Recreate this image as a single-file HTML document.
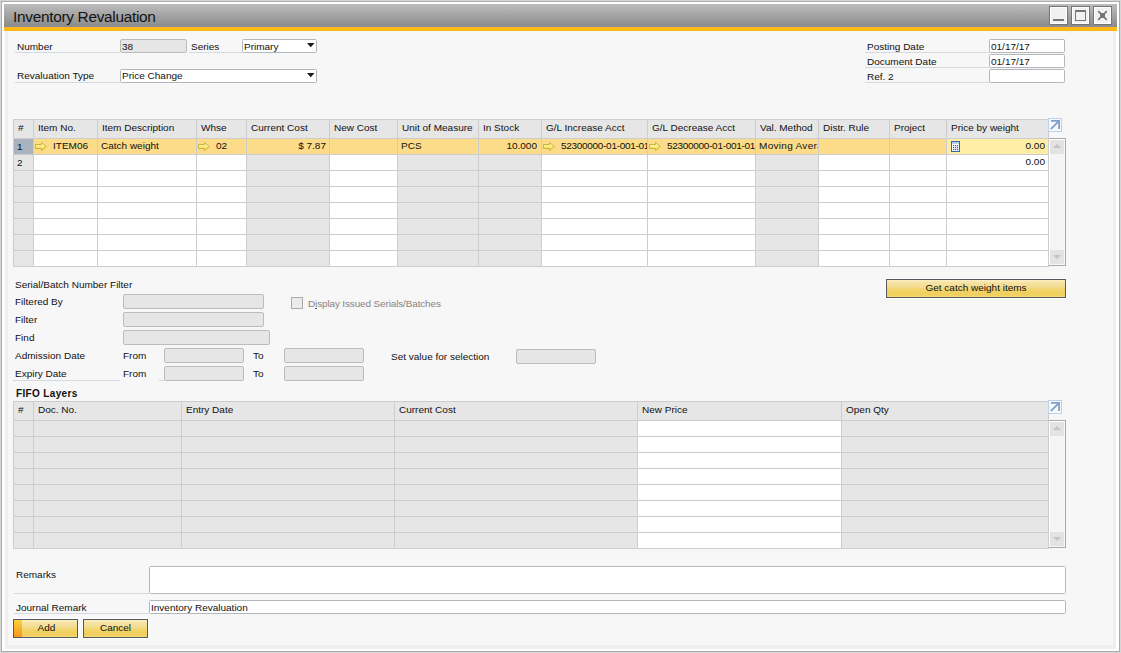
<!DOCTYPE html><html><head><meta charset="utf-8"><style>
*{margin:0;padding:0;box-sizing:border-box}
svg{display:block}
html,body{width:1121px;height:653px;overflow:hidden;background:#d7d7d7;font-family:"Liberation Sans",sans-serif}
.a{position:absolute}
.t{position:absolute;font-size:10px;line-height:10px;white-space:pre;color:#111;transform:scaleY(0.9);transform-origin:0 0}
.tb{position:absolute;font-size:10px;line-height:10px;white-space:pre;color:#101010;font-weight:bold}
.f{position:absolute;border:1px solid #b2b7bb;border-radius:1.5px;background:#fff}
.fd{position:absolute;border:1px solid #bcbcbc;border-radius:2px;background:#e6e6e6}
.ul{position:absolute;height:1px;background:#d2d9e0}
.tri{position:absolute;width:8px;height:5px}
.btn{position:absolute;border:1px solid #53575f;background:linear-gradient(#fdf0c4 0,#f6e3a4 15%,#f4dc8e 45%,#f3d56e 52%,#f0ce5a 88%,#f6dc82 100%);box-shadow:0 0 0 1px #fff}
.clip{position:absolute;overflow:hidden}
</style></head><body><div class="a" style="left:1px;top:1px;width:1119px;height:651px;border:1px solid #aaaaaa;background:#ffffff"></div>
<div class="a" style="left:5px;top:31px;width:1111px;height:618px;background:#efefef"></div>
<div class="a" style="left:8px;top:31px;width:1105px;height:614px;background:#f7f7f7"></div>
<div class="a" style="left:4px;top:4px;width:1113px;height:22px;background:linear-gradient(#bdbdbd,#8c8c8c)"></div>
<div class="a" style="left:4px;top:26px;width:1113px;height:1px;background:#868d96"></div>
<div class="a" style="left:4px;top:27px;width:1113px;height:4px;background:#fdb813"></div>
<div class="a" style="left:13px;top:9px;font-size:15.4px;letter-spacing:-0.3px;line-height:16px;white-space:pre;color:#141414">Inventory Revaluation</div>
<div class="a" style="left:1049px;top:6px;width:19px;height:19px;border:1px solid #767676;background:#f1f1f1;box-shadow:inset 0 0 0 1px #fff"></div>
<div class="a" style="left:1071px;top:6px;width:19px;height:19px;border:1px solid #767676;background:#f1f1f1;box-shadow:inset 0 0 0 1px #fff"></div>
<div class="a" style="left:1093px;top:6px;width:19px;height:19px;border:1px solid #767676;background:#f1f1f1;box-shadow:inset 0 0 0 1px #fff"></div>
<div class="a" style="left:1053px;top:19px;width:11px;height:2px;background:#767676"></div>
<div class="a" style="left:1075px;top:10px;width:11px;height:11px;border:1px solid #767676;border-top-width:2px"></div>
<svg class="a" style="left:1097px;top:10px" width="11" height="11" viewBox="0 0 11 11"><path d="M1.7 1.7L9.3 9.3M9.3 1.7L1.7 9.3" stroke="#767676" stroke-width="1.7" stroke-linecap="round"/><rect x="3" y="3" width="5" height="5" fill="#767676"/></svg>
<div class="t" style="left:17px;top:43px;">Number</div>
<div class="ul" style="left:15px;top:52px;width:105px"></div>
<div class="fd" style="left:120px;top:39px;width:67px;height:14px"></div>
<div class="t" style="left:122px;top:43px;">38</div>
<div class="t" style="left:191px;top:43px;">Series</div>
<div class="ul" style="left:189px;top:52px;width:53px"></div>
<div class="f" style="left:242px;top:39px;width:75px;height:14px"></div>
<div class="t" style="left:244px;top:43px;">Primary</div>
<svg class="tri" style="left:307px;top:43px" viewBox="0 0 8 5"><path d="M0 0H7.5L3.75 4.2Z" fill="#1c1c1c"/></svg>
<div class="t" style="left:17px;top:72px;">Revaluation Type</div>
<div class="ul" style="left:15px;top:82px;width:105px"></div>
<div class="f" style="left:120px;top:69px;width:197px;height:14px"></div>
<div class="t" style="left:122px;top:72px;">Price Change</div>
<svg class="tri" style="left:307px;top:73px" viewBox="0 0 8 5"><path d="M0 0H7.5L3.75 4.2Z" fill="#1c1c1c"/></svg>
<div class="t" style="left:867px;top:43px;">Posting Date</div>
<div class="ul" style="left:865px;top:52px;width:124px"></div>
<div class="f" style="left:989px;top:39px;width:76px;height:14px"></div>
<div class="t" style="left:991px;top:43px;">01/17/17</div>
<div class="t" style="left:867px;top:58px;">Document Date</div>
<div class="ul" style="left:865px;top:67px;width:124px"></div>
<div class="f" style="left:989px;top:54px;width:76px;height:14px"></div>
<div class="t" style="left:991px;top:58px;">01/17/17</div>
<div class="t" style="left:867px;top:73px;">Ref. 2</div>
<div class="ul" style="left:865px;top:82px;width:124px"></div>
<div class="f" style="left:989px;top:69px;width:76px;height:14px"></div>
<div class="a" style="left:13px;top:119px;width:1036px;height:148px;background:#cdcdcd"></div>
<div class="a" style="left:14px;top:120px;width:19px;height:18px;background:#e6e6e6"></div>
<div class="a" style="left:34px;top:120px;width:63px;height:18px;background:#e6e6e6"></div>
<div class="a" style="left:98px;top:120px;width:98px;height:18px;background:#e6e6e6"></div>
<div class="a" style="left:197px;top:120px;width:49px;height:18px;background:#e6e6e6"></div>
<div class="a" style="left:247px;top:120px;width:82px;height:18px;background:#e6e6e6"></div>
<div class="a" style="left:330px;top:120px;width:67px;height:18px;background:#e6e6e6"></div>
<div class="a" style="left:398px;top:120px;width:80px;height:18px;background:#e6e6e6"></div>
<div class="a" style="left:479px;top:120px;width:62px;height:18px;background:#e6e6e6"></div>
<div class="a" style="left:542px;top:120px;width:105px;height:18px;background:#e6e6e6"></div>
<div class="a" style="left:648px;top:120px;width:107px;height:18px;background:#e6e6e6"></div>
<div class="a" style="left:756px;top:120px;width:62px;height:18px;background:#e6e6e6"></div>
<div class="a" style="left:819px;top:120px;width:70px;height:18px;background:#e6e6e6"></div>
<div class="a" style="left:890px;top:120px;width:56px;height:18px;background:#e6e6e6"></div>
<div class="a" style="left:947px;top:120px;width:101px;height:18px;background:#e6e6e6"></div>
<div class="a" style="left:14px;top:139px;width:19px;height:15px;background:#a9b2bf"></div>
<div class="a" style="left:34px;top:139px;width:63px;height:15px;background:#fcdc88"></div>
<div class="a" style="left:98px;top:139px;width:98px;height:15px;background:#fcdc88"></div>
<div class="a" style="left:197px;top:139px;width:49px;height:15px;background:#fcdc88"></div>
<div class="a" style="left:247px;top:139px;width:82px;height:15px;background:#fcdc88"></div>
<div class="a" style="left:330px;top:139px;width:67px;height:15px;background:#fcdc88"></div>
<div class="a" style="left:398px;top:139px;width:80px;height:15px;background:#fcdc88"></div>
<div class="a" style="left:479px;top:139px;width:62px;height:15px;background:#fcdc88"></div>
<div class="a" style="left:542px;top:139px;width:105px;height:15px;background:#fcdc88"></div>
<div class="a" style="left:648px;top:139px;width:107px;height:15px;background:#fcdc88"></div>
<div class="a" style="left:756px;top:139px;width:62px;height:15px;background:#fcdc88"></div>
<div class="a" style="left:819px;top:139px;width:70px;height:15px;background:#fcdc88"></div>
<div class="a" style="left:890px;top:139px;width:56px;height:15px;background:#fcdc88"></div>
<div class="a" style="left:947px;top:139px;width:101px;height:15px;background:#fdeda5"></div>
<div class="a" style="left:14px;top:155px;width:19px;height:15px;background:#e6e6e6"></div>
<div class="a" style="left:34px;top:155px;width:63px;height:15px;background:#ffffff"></div>
<div class="a" style="left:98px;top:155px;width:98px;height:15px;background:#ffffff"></div>
<div class="a" style="left:197px;top:155px;width:49px;height:15px;background:#ffffff"></div>
<div class="a" style="left:247px;top:155px;width:82px;height:15px;background:#e6e6e6"></div>
<div class="a" style="left:330px;top:155px;width:67px;height:15px;background:#ffffff"></div>
<div class="a" style="left:398px;top:155px;width:80px;height:15px;background:#e6e6e6"></div>
<div class="a" style="left:479px;top:155px;width:62px;height:15px;background:#e6e6e6"></div>
<div class="a" style="left:542px;top:155px;width:105px;height:15px;background:#ffffff"></div>
<div class="a" style="left:648px;top:155px;width:107px;height:15px;background:#ffffff"></div>
<div class="a" style="left:756px;top:155px;width:62px;height:15px;background:#e6e6e6"></div>
<div class="a" style="left:819px;top:155px;width:70px;height:15px;background:#ffffff"></div>
<div class="a" style="left:890px;top:155px;width:56px;height:15px;background:#ffffff"></div>
<div class="a" style="left:947px;top:155px;width:101px;height:15px;background:#ffffff"></div>
<div class="a" style="left:14px;top:171px;width:19px;height:15px;background:#e6e6e6"></div>
<div class="a" style="left:34px;top:171px;width:63px;height:15px;background:#ffffff"></div>
<div class="a" style="left:98px;top:171px;width:98px;height:15px;background:#ffffff"></div>
<div class="a" style="left:197px;top:171px;width:49px;height:15px;background:#ffffff"></div>
<div class="a" style="left:247px;top:171px;width:82px;height:15px;background:#e6e6e6"></div>
<div class="a" style="left:330px;top:171px;width:67px;height:15px;background:#ffffff"></div>
<div class="a" style="left:398px;top:171px;width:80px;height:15px;background:#e6e6e6"></div>
<div class="a" style="left:479px;top:171px;width:62px;height:15px;background:#e6e6e6"></div>
<div class="a" style="left:542px;top:171px;width:105px;height:15px;background:#ffffff"></div>
<div class="a" style="left:648px;top:171px;width:107px;height:15px;background:#ffffff"></div>
<div class="a" style="left:756px;top:171px;width:62px;height:15px;background:#e6e6e6"></div>
<div class="a" style="left:819px;top:171px;width:70px;height:15px;background:#ffffff"></div>
<div class="a" style="left:890px;top:171px;width:56px;height:15px;background:#ffffff"></div>
<div class="a" style="left:947px;top:171px;width:101px;height:15px;background:#ffffff"></div>
<div class="a" style="left:14px;top:187px;width:19px;height:15px;background:#e6e6e6"></div>
<div class="a" style="left:34px;top:187px;width:63px;height:15px;background:#ffffff"></div>
<div class="a" style="left:98px;top:187px;width:98px;height:15px;background:#ffffff"></div>
<div class="a" style="left:197px;top:187px;width:49px;height:15px;background:#ffffff"></div>
<div class="a" style="left:247px;top:187px;width:82px;height:15px;background:#e6e6e6"></div>
<div class="a" style="left:330px;top:187px;width:67px;height:15px;background:#ffffff"></div>
<div class="a" style="left:398px;top:187px;width:80px;height:15px;background:#e6e6e6"></div>
<div class="a" style="left:479px;top:187px;width:62px;height:15px;background:#e6e6e6"></div>
<div class="a" style="left:542px;top:187px;width:105px;height:15px;background:#ffffff"></div>
<div class="a" style="left:648px;top:187px;width:107px;height:15px;background:#ffffff"></div>
<div class="a" style="left:756px;top:187px;width:62px;height:15px;background:#e6e6e6"></div>
<div class="a" style="left:819px;top:187px;width:70px;height:15px;background:#ffffff"></div>
<div class="a" style="left:890px;top:187px;width:56px;height:15px;background:#ffffff"></div>
<div class="a" style="left:947px;top:187px;width:101px;height:15px;background:#ffffff"></div>
<div class="a" style="left:14px;top:203px;width:19px;height:15px;background:#e6e6e6"></div>
<div class="a" style="left:34px;top:203px;width:63px;height:15px;background:#ffffff"></div>
<div class="a" style="left:98px;top:203px;width:98px;height:15px;background:#ffffff"></div>
<div class="a" style="left:197px;top:203px;width:49px;height:15px;background:#ffffff"></div>
<div class="a" style="left:247px;top:203px;width:82px;height:15px;background:#e6e6e6"></div>
<div class="a" style="left:330px;top:203px;width:67px;height:15px;background:#ffffff"></div>
<div class="a" style="left:398px;top:203px;width:80px;height:15px;background:#e6e6e6"></div>
<div class="a" style="left:479px;top:203px;width:62px;height:15px;background:#e6e6e6"></div>
<div class="a" style="left:542px;top:203px;width:105px;height:15px;background:#ffffff"></div>
<div class="a" style="left:648px;top:203px;width:107px;height:15px;background:#ffffff"></div>
<div class="a" style="left:756px;top:203px;width:62px;height:15px;background:#e6e6e6"></div>
<div class="a" style="left:819px;top:203px;width:70px;height:15px;background:#ffffff"></div>
<div class="a" style="left:890px;top:203px;width:56px;height:15px;background:#ffffff"></div>
<div class="a" style="left:947px;top:203px;width:101px;height:15px;background:#ffffff"></div>
<div class="a" style="left:14px;top:219px;width:19px;height:15px;background:#e6e6e6"></div>
<div class="a" style="left:34px;top:219px;width:63px;height:15px;background:#ffffff"></div>
<div class="a" style="left:98px;top:219px;width:98px;height:15px;background:#ffffff"></div>
<div class="a" style="left:197px;top:219px;width:49px;height:15px;background:#ffffff"></div>
<div class="a" style="left:247px;top:219px;width:82px;height:15px;background:#e6e6e6"></div>
<div class="a" style="left:330px;top:219px;width:67px;height:15px;background:#ffffff"></div>
<div class="a" style="left:398px;top:219px;width:80px;height:15px;background:#e6e6e6"></div>
<div class="a" style="left:479px;top:219px;width:62px;height:15px;background:#e6e6e6"></div>
<div class="a" style="left:542px;top:219px;width:105px;height:15px;background:#ffffff"></div>
<div class="a" style="left:648px;top:219px;width:107px;height:15px;background:#ffffff"></div>
<div class="a" style="left:756px;top:219px;width:62px;height:15px;background:#e6e6e6"></div>
<div class="a" style="left:819px;top:219px;width:70px;height:15px;background:#ffffff"></div>
<div class="a" style="left:890px;top:219px;width:56px;height:15px;background:#ffffff"></div>
<div class="a" style="left:947px;top:219px;width:101px;height:15px;background:#ffffff"></div>
<div class="a" style="left:14px;top:235px;width:19px;height:15px;background:#e6e6e6"></div>
<div class="a" style="left:34px;top:235px;width:63px;height:15px;background:#ffffff"></div>
<div class="a" style="left:98px;top:235px;width:98px;height:15px;background:#ffffff"></div>
<div class="a" style="left:197px;top:235px;width:49px;height:15px;background:#ffffff"></div>
<div class="a" style="left:247px;top:235px;width:82px;height:15px;background:#e6e6e6"></div>
<div class="a" style="left:330px;top:235px;width:67px;height:15px;background:#ffffff"></div>
<div class="a" style="left:398px;top:235px;width:80px;height:15px;background:#e6e6e6"></div>
<div class="a" style="left:479px;top:235px;width:62px;height:15px;background:#e6e6e6"></div>
<div class="a" style="left:542px;top:235px;width:105px;height:15px;background:#ffffff"></div>
<div class="a" style="left:648px;top:235px;width:107px;height:15px;background:#ffffff"></div>
<div class="a" style="left:756px;top:235px;width:62px;height:15px;background:#e6e6e6"></div>
<div class="a" style="left:819px;top:235px;width:70px;height:15px;background:#ffffff"></div>
<div class="a" style="left:890px;top:235px;width:56px;height:15px;background:#ffffff"></div>
<div class="a" style="left:947px;top:235px;width:101px;height:15px;background:#ffffff"></div>
<div class="a" style="left:14px;top:251px;width:19px;height:15px;background:#e6e6e6"></div>
<div class="a" style="left:34px;top:251px;width:63px;height:15px;background:#ffffff"></div>
<div class="a" style="left:98px;top:251px;width:98px;height:15px;background:#ffffff"></div>
<div class="a" style="left:197px;top:251px;width:49px;height:15px;background:#ffffff"></div>
<div class="a" style="left:247px;top:251px;width:82px;height:15px;background:#e6e6e6"></div>
<div class="a" style="left:330px;top:251px;width:67px;height:15px;background:#ffffff"></div>
<div class="a" style="left:398px;top:251px;width:80px;height:15px;background:#e6e6e6"></div>
<div class="a" style="left:479px;top:251px;width:62px;height:15px;background:#e6e6e6"></div>
<div class="a" style="left:542px;top:251px;width:105px;height:15px;background:#ffffff"></div>
<div class="a" style="left:648px;top:251px;width:107px;height:15px;background:#ffffff"></div>
<div class="a" style="left:756px;top:251px;width:62px;height:15px;background:#e6e6e6"></div>
<div class="a" style="left:819px;top:251px;width:70px;height:15px;background:#ffffff"></div>
<div class="a" style="left:890px;top:251px;width:56px;height:15px;background:#ffffff"></div>
<div class="a" style="left:947px;top:251px;width:101px;height:15px;background:#ffffff"></div>
<div class="t" style="left:18px;top:124px;">#</div>
<div class="t" style="left:38px;top:124px;">Item No.</div>
<div class="t" style="left:102px;top:124px;">Item Description</div>
<div class="t" style="left:201px;top:124px;">Whse</div>
<div class="t" style="left:251px;top:124px;">Current Cost</div>
<div class="t" style="left:334px;top:124px;">New Cost</div>
<div class="t" style="left:402px;top:124px;">Unit of Measure</div>
<div class="t" style="left:483px;top:124px;">In Stock</div>
<div class="t" style="left:546px;top:124px;">G/L Increase Acct</div>
<div class="t" style="left:652px;top:124px;">G/L Decrease Acct</div>
<div class="t" style="left:760px;top:124px;">Val. Method</div>
<div class="t" style="left:823px;top:124px;">Distr. Rule</div>
<div class="t" style="left:894px;top:124px;">Project</div>
<div class="t" style="left:951px;top:124px;">Price by weight</div>
<div class="t" style="left:17px;top:143px;">1</div>
<div class="t" style="left:17px;top:159px;">2</div>
<svg width="0" height="0" style="position:absolute"><defs><linearGradient id="ag" x1="0" y1="0" x2="0" y2="1"><stop offset="0" stop-color="#fffbe0"/><stop offset="1" stop-color="#f6d820"/></linearGradient></defs></svg>
<div class="clip" style="left:34px;top:139px;width:63px;height:15px"><div class="a" style="left:1px;top:3px;line-height:0"><svg width="12" height="9" viewBox="0 0 12 9"><path d="M0.5 2.5H6.5V0.5L11.3 4.5L6.5 8.5V6.5H0.5Z" fill="url(#ag)" stroke="#c9b53e" stroke-width="1"/></svg></div><div class="t" style="left:19px;top:3px;letter-spacing:0">ITEM06</div></div>
<div class="clip" style="left:197px;top:139px;width:49px;height:15px"><div class="a" style="left:1px;top:3px;line-height:0"><svg width="12" height="9" viewBox="0 0 12 9"><path d="M0.5 2.5H6.5V0.5L11.3 4.5L6.5 8.5V6.5H0.5Z" fill="url(#ag)" stroke="#c9b53e" stroke-width="1"/></svg></div><div class="t" style="left:19px;top:3px;letter-spacing:0">02</div></div>
<div class="clip" style="left:542px;top:139px;width:105px;height:15px"><div class="a" style="left:1px;top:3px;line-height:0"><svg width="12" height="9" viewBox="0 0 12 9"><path d="M0.5 2.5H6.5V0.5L11.3 4.5L6.5 8.5V6.5H0.5Z" fill="url(#ag)" stroke="#c9b53e" stroke-width="1"/></svg></div><div class="t" style="left:19px;top:3px;letter-spacing:-0.3px">52300000-01-001-01</div></div>
<div class="clip" style="left:648px;top:139px;width:107px;height:15px"><div class="a" style="left:1px;top:3px;line-height:0"><svg width="12" height="9" viewBox="0 0 12 9"><path d="M0.5 2.5H6.5V0.5L11.3 4.5L6.5 8.5V6.5H0.5Z" fill="url(#ag)" stroke="#c9b53e" stroke-width="1"/></svg></div><div class="t" style="left:19px;top:3px;letter-spacing:-0.3px">52300000-01-001-01</div></div>
<div class="clip" style="left:98px;top:139px;width:98px;height:15px"><div class="t" style="left:3px;top:3px">Catch weight</div></div>
<div class="clip" style="left:398px;top:139px;width:80px;height:15px"><div class="t" style="left:3px;top:3px">PCS</div></div>
<div class="clip" style="left:756px;top:139px;width:62px;height:15px"><div class="t" style="left:3px;top:3px;letter-spacing:0.3px">Moving Average</div></div>
<div class="clip" style="left:247px;top:139px;width:82px;height:15px"><div class="t" style="right:3px;top:3px">$ 7.87</div></div>
<div class="clip" style="left:479px;top:139px;width:62px;height:15px"><div class="t" style="right:4px;top:3px">10.000</div></div>
<div class="clip" style="left:947px;top:139px;width:101px;height:15px"><div class="t" style="right:3px;top:3px">0.00</div></div>
<div class="clip" style="left:947px;top:155px;width:101px;height:15px"><div class="t" style="right:3px;top:3px">0.00</div></div>
<svg class="a" style="left:951px;top:141px" width="9" height="11" viewBox="0 0 9 11"><rect x="0.5" y="0.5" width="8" height="10" fill="#fbfdff" stroke="#3166b2"/><rect x="1" y="1" width="7" height="2" fill="#b9d0ee"/><g fill="#2a5ca8"><rect x="2" y="4" width="1.2" height="1.2"/><rect x="4" y="4" width="1.2" height="1.2"/><rect x="6" y="4" width="1.2" height="1.2"/><rect x="2" y="6" width="1.2" height="1.2"/><rect x="4" y="6" width="1.2" height="1.2"/><rect x="6" y="6" width="1.2" height="1.2"/><rect x="2" y="8" width="1.2" height="1.2"/><rect x="4" y="8" width="1.2" height="1.2"/><rect x="6" y="8" width="1.2" height="1.2"/></g></svg>
<svg class="a" style="left:1048px;top:118px" width="14" height="14" viewBox="0 0 14 14"><rect x="0.5" y="0.5" width="13" height="13" fill="#fafafa" stroke="#b9d1ea"/><path d="M3 2.9H11.1V11" fill="none" stroke="#7d9fcd" stroke-width="1.8"/><path d="M2.8 11.2L10.6 3.4" stroke="#7d9fcd" stroke-width="1.8"/></svg>
<div class="a" style="left:1049px;top:138px;width:17px;height:128px;border-top:1px solid #aaaaaa;border-right:1px solid #aaaaaa;border-bottom:1px solid #aaaaaa;background:#f5f5f5;box-shadow:inset 1px 1px 0 #fff"></div>
<div class="a" style="left:1050px;top:140px;width:14px;height:14px;background:#e3e3e3"></div>
<div class="a" style="left:1053px;top:144px;width:0;height:0;border-left:4px solid transparent;border-right:4px solid transparent;border-bottom:4px solid #c4c4c4"></div>
<div class="a" style="left:1050px;top:250px;width:14px;height:14px;background:#e3e3e3"></div>
<div class="a" style="left:1053px;top:255px;width:0;height:0;border-left:4px solid transparent;border-right:4px solid transparent;border-top:4px solid #c4c4c4"></div>
<div class="t" style="left:15px;top:281px;">Serial/Batch Number Filter</div>
<div class="t" style="left:15px;top:298px;">Filtered By</div>
<div class="t" style="left:15px;top:316px;">Filter</div>
<div class="t" style="left:15px;top:334px;">Find</div>
<div class="t" style="left:15px;top:352px;">Admission Date</div>
<div class="t" style="left:15px;top:370px;">Expiry Date</div>
<div class="ul" style="left:13px;top:380px;width:107px"></div>
<div class="ul" style="left:159px;top:380px;width:5px"></div>
<div class="fd" style="left:123px;top:294px;width:141px;height:15px"></div>
<div class="fd" style="left:123px;top:312px;width:141px;height:15px"></div>
<div class="fd" style="left:123px;top:330px;width:147px;height:15px"></div>
<div class="t" style="left:123px;top:352px;">From</div>
<div class="t" style="left:123px;top:370px;">From</div>
<div class="t" style="left:253px;top:352px;">To</div>
<div class="t" style="left:253px;top:370px;">To</div>
<div class="fd" style="left:164px;top:348px;width:80px;height:15px"></div>
<div class="fd" style="left:164px;top:366px;width:80px;height:15px"></div>
<div class="fd" style="left:284px;top:348px;width:80px;height:15px"></div>
<div class="fd" style="left:284px;top:366px;width:80px;height:15px"></div>
<div class="t" style="left:391px;top:353px;">Set value for selection</div>
<div class="fd" style="left:516px;top:349px;width:80px;height:15px"></div>
<div class="a" style="left:291px;top:297px;width:12px;height:12px;border:1px solid #ababab;background:#ebebeb"></div>
<div class="t" style="left:308px;top:300px;color:#858585;letter-spacing:-0.15px">Display Issued Serials/Batches</div>
<div class="a" style="left:315px;top:308px;width:2px;height:1px;background:#505050"></div>
<div class="btn" style="left:886px;top:279px;width:180px;height:19px"></div>
<div class="t" style="left:886px;top:284px;width:180px;text-align:center">Get catch weight items</div>
<div class="tb" style="left:16px;top:389px;letter-spacing:0.35px">FIFO Layers</div>
<div class="a" style="left:13px;top:401px;width:1036px;height:148px;background:#cdcdcd"></div>
<div class="a" style="left:14px;top:402px;width:19px;height:18px;background:#e6e6e6"></div>
<div class="a" style="left:34px;top:402px;width:147px;height:18px;background:#e6e6e6"></div>
<div class="a" style="left:182px;top:402px;width:212px;height:18px;background:#e6e6e6"></div>
<div class="a" style="left:395px;top:402px;width:242px;height:18px;background:#e6e6e6"></div>
<div class="a" style="left:638px;top:402px;width:203px;height:18px;background:#e6e6e6"></div>
<div class="a" style="left:842px;top:402px;width:206px;height:18px;background:#e6e6e6"></div>
<div class="a" style="left:14px;top:421px;width:19px;height:15px;background:#e6e6e6"></div>
<div class="a" style="left:34px;top:421px;width:147px;height:15px;background:#e6e6e6"></div>
<div class="a" style="left:182px;top:421px;width:212px;height:15px;background:#e6e6e6"></div>
<div class="a" style="left:395px;top:421px;width:242px;height:15px;background:#e6e6e6"></div>
<div class="a" style="left:638px;top:421px;width:203px;height:15px;background:#ffffff"></div>
<div class="a" style="left:842px;top:421px;width:206px;height:15px;background:#e6e6e6"></div>
<div class="a" style="left:14px;top:437px;width:19px;height:15px;background:#e6e6e6"></div>
<div class="a" style="left:34px;top:437px;width:147px;height:15px;background:#e6e6e6"></div>
<div class="a" style="left:182px;top:437px;width:212px;height:15px;background:#e6e6e6"></div>
<div class="a" style="left:395px;top:437px;width:242px;height:15px;background:#e6e6e6"></div>
<div class="a" style="left:638px;top:437px;width:203px;height:15px;background:#ffffff"></div>
<div class="a" style="left:842px;top:437px;width:206px;height:15px;background:#e6e6e6"></div>
<div class="a" style="left:14px;top:453px;width:19px;height:15px;background:#e6e6e6"></div>
<div class="a" style="left:34px;top:453px;width:147px;height:15px;background:#e6e6e6"></div>
<div class="a" style="left:182px;top:453px;width:212px;height:15px;background:#e6e6e6"></div>
<div class="a" style="left:395px;top:453px;width:242px;height:15px;background:#e6e6e6"></div>
<div class="a" style="left:638px;top:453px;width:203px;height:15px;background:#ffffff"></div>
<div class="a" style="left:842px;top:453px;width:206px;height:15px;background:#e6e6e6"></div>
<div class="a" style="left:14px;top:469px;width:19px;height:15px;background:#e6e6e6"></div>
<div class="a" style="left:34px;top:469px;width:147px;height:15px;background:#e6e6e6"></div>
<div class="a" style="left:182px;top:469px;width:212px;height:15px;background:#e6e6e6"></div>
<div class="a" style="left:395px;top:469px;width:242px;height:15px;background:#e6e6e6"></div>
<div class="a" style="left:638px;top:469px;width:203px;height:15px;background:#ffffff"></div>
<div class="a" style="left:842px;top:469px;width:206px;height:15px;background:#e6e6e6"></div>
<div class="a" style="left:14px;top:485px;width:19px;height:15px;background:#e6e6e6"></div>
<div class="a" style="left:34px;top:485px;width:147px;height:15px;background:#e6e6e6"></div>
<div class="a" style="left:182px;top:485px;width:212px;height:15px;background:#e6e6e6"></div>
<div class="a" style="left:395px;top:485px;width:242px;height:15px;background:#e6e6e6"></div>
<div class="a" style="left:638px;top:485px;width:203px;height:15px;background:#ffffff"></div>
<div class="a" style="left:842px;top:485px;width:206px;height:15px;background:#e6e6e6"></div>
<div class="a" style="left:14px;top:501px;width:19px;height:15px;background:#e6e6e6"></div>
<div class="a" style="left:34px;top:501px;width:147px;height:15px;background:#e6e6e6"></div>
<div class="a" style="left:182px;top:501px;width:212px;height:15px;background:#e6e6e6"></div>
<div class="a" style="left:395px;top:501px;width:242px;height:15px;background:#e6e6e6"></div>
<div class="a" style="left:638px;top:501px;width:203px;height:15px;background:#ffffff"></div>
<div class="a" style="left:842px;top:501px;width:206px;height:15px;background:#e6e6e6"></div>
<div class="a" style="left:14px;top:517px;width:19px;height:15px;background:#e6e6e6"></div>
<div class="a" style="left:34px;top:517px;width:147px;height:15px;background:#e6e6e6"></div>
<div class="a" style="left:182px;top:517px;width:212px;height:15px;background:#e6e6e6"></div>
<div class="a" style="left:395px;top:517px;width:242px;height:15px;background:#e6e6e6"></div>
<div class="a" style="left:638px;top:517px;width:203px;height:15px;background:#ffffff"></div>
<div class="a" style="left:842px;top:517px;width:206px;height:15px;background:#e6e6e6"></div>
<div class="a" style="left:14px;top:533px;width:19px;height:15px;background:#e6e6e6"></div>
<div class="a" style="left:34px;top:533px;width:147px;height:15px;background:#e6e6e6"></div>
<div class="a" style="left:182px;top:533px;width:212px;height:15px;background:#e6e6e6"></div>
<div class="a" style="left:395px;top:533px;width:242px;height:15px;background:#e6e6e6"></div>
<div class="a" style="left:638px;top:533px;width:203px;height:15px;background:#ffffff"></div>
<div class="a" style="left:842px;top:533px;width:206px;height:15px;background:#e6e6e6"></div>
<div class="t" style="left:18px;top:406px;">#</div>
<div class="t" style="left:38px;top:406px;">Doc. No.</div>
<div class="t" style="left:186px;top:406px;">Entry Date</div>
<div class="t" style="left:399px;top:406px;">Current Cost</div>
<div class="t" style="left:642px;top:406px;">New Price</div>
<div class="t" style="left:846px;top:406px;">Open Qty</div>
<svg class="a" style="left:1048px;top:400px" width="14" height="14" viewBox="0 0 14 14"><rect x="0.5" y="0.5" width="13" height="13" fill="#fafafa" stroke="#b9d1ea"/><path d="M3 2.9H11.1V11" fill="none" stroke="#7d9fcd" stroke-width="1.8"/><path d="M2.8 11.2L10.6 3.4" stroke="#7d9fcd" stroke-width="1.8"/></svg>
<div class="a" style="left:1049px;top:420px;width:17px;height:128px;border-top:1px solid #aaaaaa;border-right:1px solid #aaaaaa;border-bottom:1px solid #aaaaaa;background:#f5f5f5;box-shadow:inset 1px 1px 0 #fff"></div>
<div class="a" style="left:1050px;top:422px;width:14px;height:14px;background:#e3e3e3"></div>
<div class="a" style="left:1053px;top:426px;width:0;height:0;border-left:4px solid transparent;border-right:4px solid transparent;border-bottom:4px solid #c4c4c4"></div>
<div class="a" style="left:1050px;top:532px;width:14px;height:14px;background:#e3e3e3"></div>
<div class="a" style="left:1053px;top:537px;width:0;height:0;border-left:4px solid transparent;border-right:4px solid transparent;border-top:4px solid #c4c4c4"></div>
<div class="t" style="left:16px;top:571px;">Remarks</div>
<div class="ul" style="left:14px;top:593px;width:135px"></div>
<div class="f" style="left:149px;top:566px;width:917px;height:28px"></div>
<div class="t" style="left:16px;top:604px;">Journal Remark</div>
<div class="ul" style="left:14px;top:613px;width:135px"></div>
<div class="f" style="left:149px;top:600px;width:917px;height:14px"></div>
<div class="t" style="left:151px;top:604px;">Inventory Revaluation</div>
<div class="btn" style="left:13px;top:619px;width:65px;height:19px"></div>
<div class="a" style="left:14px;top:620px;width:8px;height:17px;background:linear-gradient(#fdd23c,#f7941d)"></div>
<div class="t" style="left:22px;top:624px;width:49px;text-align:center">Add</div>
<div class="btn" style="left:83px;top:619px;width:65px;height:19px"></div>
<div class="t" style="left:83px;top:624px;width:65px;text-align:center">Cancel</div></body></html>
